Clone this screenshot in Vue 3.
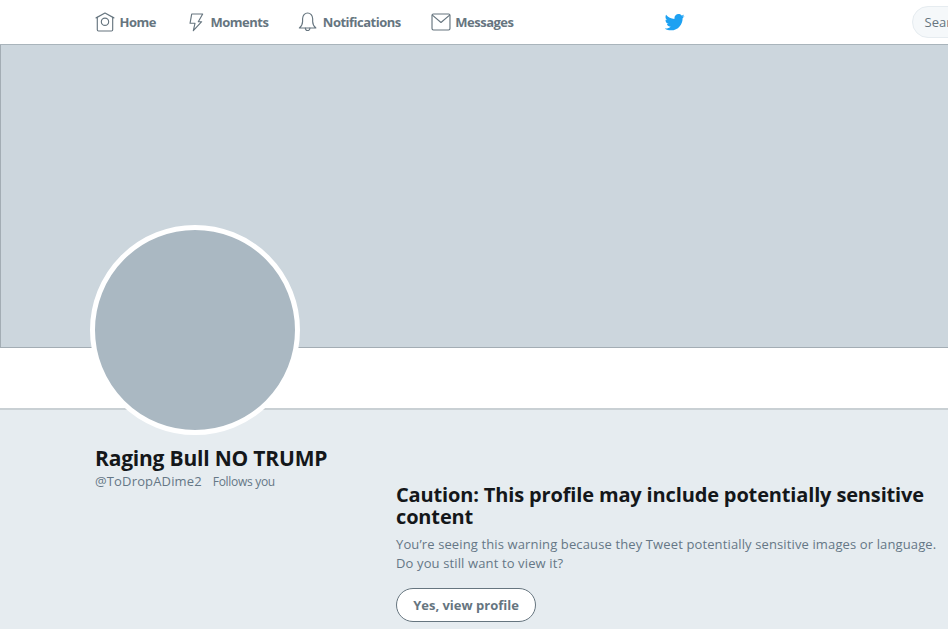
<template>
  <div class="page">
    <header class="nav">
      <a v-for="item in navItems" :key="item.label" class="nav-item">
        <svg class="nav-icon" viewBox="0 0 24 24" fill="none" stroke="#66757f" stroke-width="1.25" stroke-linejoin="round" stroke-linecap="round">
          <path v-for="d in item.paths" :key="d" :d="d" />
        </svg>
        <span>{{ item.label }}</span>
      </a>
      <svg class="bird" viewBox="0 0 24 24"><path fill="#1da1f2" d="M23.6 4.8c-.9.4-1.8.7-2.8.8 1-.6 1.8-1.6 2.1-2.7-.9.6-2 1-3.1 1.2C18.9 3.1 17.6 2.500 16.200 2.500c-2.700 0-4.900 2.200-4.900 4.900 0 .4 0 .8.100 1.100C7.300 8.300 3.700 6.300 1.300 3.400.9 4.100.6 5 .6 5.900c0 1.700.9 3.200 2.200 4.100-.8 0-1.600-.2-2.200-.6v.1c0 2.400 1.700 4.400 3.900 4.800-.4.100-.8.200-1.300.2-.3 0-.6 0-.9-.1.600 2 2.400 3.400 4.600 3.400-1.700 1.300-3.800 2.100-6.100 2.100-.4 0-.8 0-1.200-.1 2.200 1.400 4.800 2.200 7.500 2.200 9.100 0 14-7.500 14-14v-.6c1-.7 1.800-1.600 2.500-2.500z"/></svg>
      <div class="search">Search Twitter</div>
    </header>
    <div class="cover"></div>
    <div class="band"></div>
    <div class="avatar"></div>
    <main class="content">
      <section class="side">
        <h1>Raging Bull NO TRUMP</h1>
        <div class="handle"><span>@ToDropADime2</span><small>Follows you</small></div>
      </section>
      <section class="warning">
        <h2>Caution: This profile may include potentially sensitive content</h2>
        <p>You’re seeing this warning because they Tweet potentially sensitive images or language. Do you still want to view it?</p>
        <button type="button">Yes, view profile</button>
      </section>
    </main>
  </div>
</template>

<script setup>
const navItems = [
  { label: 'Home', paths: ['M1.200 7.500 10.900 2.200 20.600 7.500', 'M2.500 6.800V20.500c0 .7.500 1.300 1.300 1.300H18c.8 0 1.300-.6 1.300-1.300V6.800', 'M10.900 7.700a4 4 0 1 0 0 8 4 4 0 0 0 0-8z'] },
  { label: 'Moments', paths: ['M6.200 3.300H18.200L13.400 11.700H17.100L8 21.500 9.800 13.400H4.400z'] },
  { label: 'Notifications', paths: ['M1.500 18.500c2.500-2 3.500-4 3.500-7V8.500a5.500 6.300 0 0 1 11 0v3c0 3 1 5 3.500 7z', 'M8 18.500a2.500 2.800 0 0 0 5 0'] },
  { label: 'Messages', paths: ['M2.600 3.300H19.200c.8 0 1.500.7 1.500 1.500V19.200c0 .8-.7 1.500-1.500 1.500H2.600c-.8 0-1.500-.7-1.500-1.500V4.800c0-.8.7-1.500 1.500-1.500z', 'M1.500 4.500 10.900 12.500 20.300 4.500'] }
]
</script>

<style scoped>
.page {
  position: relative;
  width: 948px;
  height: 629px;
  overflow: hidden;
  background: #e6ecf0;
  font-family: "Open Sans", "Noto Sans", sans-serif;
  color: #14171a;
}
.nav {
  display: flex;
  align-items: center;
  gap: 30px;
  height: 44px;
  padding-left: 95px;
  background: #fff;
  border-bottom: 1px solid #a9b4bb;
}
.nav-item {
  display: flex;
  align-items: center;
  gap: 2.5px;
  font-size: 13px;
  font-weight: 700;
  letter-spacing: -0.5px;
  color: #66757f;
}
.nav-icon {
  width: 22px;
  height: 22px;
  flex: none;
}
.bird {
  width: 20px;
  height: 20px;
  flex: none;
  margin-left: 121px;
}
.search {
  width: 170px;
  height: 32px;
  margin-left: 197px;
  padding-left: 12px;
  flex: none;
  box-sizing: border-box;
  line-height: 30px;
  font-size: 13px;
  color: #66757f;
  background: #f5f8fa;
  border: 1px solid #e6ecf0;
  border-radius: 16px;
  white-space: nowrap;
}
.cover {
  height: 303px;
  box-sizing: border-box;
  background: #ccd6dd;
  border-left: 1px solid #a3adb4;
  border-bottom: 1px solid #a3adb4;
}
.band {
  height: 60px;
  background: #fff;
  border-bottom: 2px solid #c9d0d4;
}
.avatar {
  position: absolute;
  left: 90px;
  top: 225px;
  width: 200px;
  height: 200px;
  background: #aab8c2;
  border: 5px solid #fff;
  border-radius: 50%;
}
.content {
  display: flex;
  padding-left: 95px;
}
.side {
  width: 301px;
  flex: none;
  padding-top: 35px;
}
h1 {
  margin: 0;
  font-size: 21px;
  line-height: 27px;
  font-weight: 700;
  letter-spacing: -0.2px;
  white-space: nowrap;
}
.handle {
  display: flex;
  align-items: baseline;
  gap: 11px;
  font-size: 13px;
  line-height: 18px;
  color: #657786;
  letter-spacing: 0.15px;
}
.handle small {
  font-size: 12px;
  letter-spacing: -0.3px;
}
.warning {
  width: 552px;
  flex: none;
  padding-top: 74px;
}
h2 {
  margin: 0;
  font-size: 20px;
  line-height: 22px;
  font-weight: 700;
  letter-spacing: -0.15px;
}
p {
  margin: 7px 0 0;
  font-size: 13px;
  line-height: 19px;
  color: #657786;
  letter-spacing: 0.125px;
}
button {
  display: block;
  margin-top: 15px;
  width: 140px;
  height: 34px;
  padding: 0;
  font: 700 13px "Open Sans", "Noto Sans", sans-serif;
  color: #66757f;
  background: #fff;
  border: 1px solid #66757f;
  border-radius: 17px;
}
</style>
